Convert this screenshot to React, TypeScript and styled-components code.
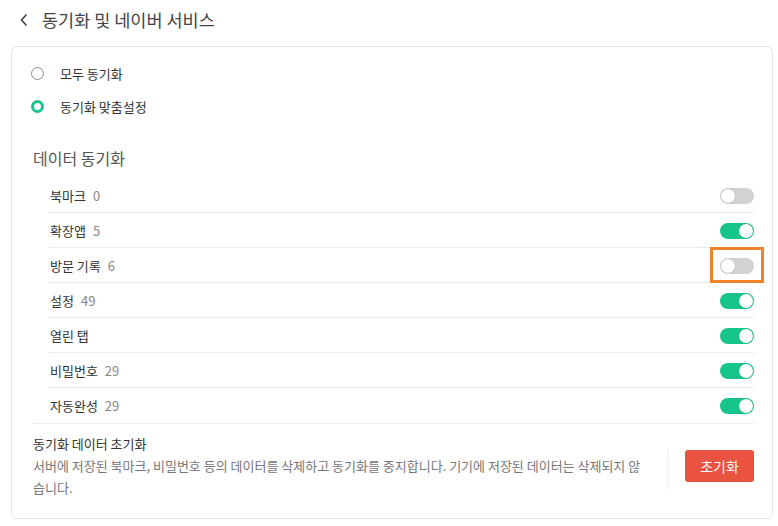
import React, { useState } from 'react';
import styled, { createGlobalStyle } from 'styled-components';

const GlobalStyle = createGlobalStyle`
  html, body {
    margin: 0;
    padding: 0;
    background: #fff;
  }
  body {
    font-family: "Noto Sans CJK KR", "Noto Sans", sans-serif;
    color: #333;
  }
`;

const Page = styled.div`
  width: 778px;
  height: 526px;
  box-sizing: border-box;
  overflow: hidden;
`;

const Header = styled.div`
  height: 40px;
  display: flex;
  align-items: center;
  gap: 10px;
  padding-left: 16px;
`;

const BackButton = styled.button`
  border: 0;
  background: none;
  padding: 0;
  width: 16px;
  height: 16px;
  display: flex;
  align-items: center;
  justify-content: center;
  cursor: pointer;
`;

const Title = styled.h1`
  margin: 0;
  font-size: 17.5px;
  font-weight: 400;
  color: #444;
  line-height: 24px;
`;

const Card = styled.div`
  margin: 6px 5px 0 11px;
  border: 1px solid #e3e3e3;
  border-radius: 6px;
  padding: 10px 0 18px 0;
  box-sizing: border-box;
  height: 473px;
`;

const RadioGroup = styled.div`
  display: flex;
  flex-direction: column;
  padding-left: 19px;
`;

const RadioRow = styled.label`
  height: 33px;
  display: flex;
  align-items: center;
  gap: 16px;
  font-size: 13px;
  color: #333;
  cursor: pointer;
`;

const RadioDot = styled.span<{ $checked: boolean }>`
  width: 13px;
  height: 13px;
  box-sizing: border-box;
  border-radius: 50%;
  border: ${({ $checked }) => ($checked ? '3.5px solid #18c48e' : '1px solid #8a8a8a')};
  background: #fff;
`;

const SectionTitle = styled.h2`
  margin: 23px 0 8px 21px;
  font-size: 16px;
  font-weight: 400;
  color: #555;
  line-height: 24px;
`;

const List = styled.div`
  margin: 0 18px 0 21px;
  border-bottom: 1px solid #ececec;
`;

const Row = styled.div<{ $last?: boolean }>`
  height: 35px;
  box-sizing: border-box;
  margin-left: 16px;
  display: flex;
  align-items: center;
  border-bottom: ${({ $last }) => ($last ? '0' : '1px solid #ececec')};
  position: relative;
`;

const Label = styled.span`
  font-size: 13px;
  color: #333;
  flex: 1;
  padding-left: 1px;
`;

const Count = styled.span`
  color: #888;
  margin-left: 7px;
`;

const Track = styled.button<{ $on: boolean }>`
  width: 34px;
  height: 16px;
  border: 0;
  padding: 0;
  border-radius: 8px;
  background: ${({ $on }) => ($on ? '#16c48c' : '#d2d2d2')};
  position: relative;
  cursor: pointer;
  margin-top: 1px;
`;

const Knob = styled.span<{ $on: boolean }>`
  position: absolute;
  top: 1px;
  left: ${({ $on }) => ($on ? '19px' : '1px')};
  width: 14px;
  height: 14px;
  border-radius: 50%;
  background: #fff;
  box-shadow: 0 0 1px rgba(0, 0, 0, 0.35);
`;

const Highlight = styled.span`
  position: absolute;
  right: -10px;
  top: -1px;
  width: 54px;
  height: 36px;
  box-sizing: border-box;
  border: 3px solid #f0832a;
  pointer-events: none;
`;

const ResetSection = styled.div`
  display: flex;
  align-items: flex-start;
  padding: 9px 18px 0 21px;
`;

const ResetText = styled.div`
  flex: 1;
  padding-right: 21px;
`;

const ResetTitle = styled.div`
  font-size: 13px;
  color: #333;
  line-height: 22px;
`;

const ResetDesc = styled.p`
  margin: 0;
  font-size: 13px;
  color: #777;
  line-height: 22px;
`;

const ResetAction = styled.div`
  border-left: 1px solid #f0f0f0;
  margin-top: 16px;
  height: 42px;
  padding-left: 16px;
  display: flex;
  align-items: flex-start;
`;

const ResetButton = styled.button`
  margin-top: 1px;
  width: 69px;
  height: 32px;
  border: 0;
  border-radius: 3px;
  background: #e9533f;
  color: #fff;
  font-family: "Noto Sans CJK KR", "Noto Sans", sans-serif;
  font-size: 14px;
  cursor: pointer;
`;

type Item = { name: string; count?: number; on: boolean; marked?: boolean };

const initialItems: Item[] = [
  { name: '북마크', count: 0, on: false },
  { name: '확장앱', count: 5, on: true },
  { name: '방문 기록', count: 6, on: false, marked: true },
  { name: '설정', count: 49, on: true },
  { name: '열린 탭', on: true },
  { name: '비밀번호', count: 29, on: true },
  { name: '자동완성', count: 29, on: true },
];

const App: React.FC = () => {
  const [mode, setMode] = useState<'all' | 'custom'>('custom');
  const [items, setItems] = useState(initialItems);

  const toggle = (i: number) => {
    setItems(prev => prev.map((it, idx) => (idx === i ? { ...it, on: !it.on } : it)));
  };

  return (
    <Page>
      <GlobalStyle />
      <Header>
        <BackButton aria-label="뒤로">
          <svg width="10" height="14" viewBox="0 0 10 14">
            <path d="M7.5 1.5 L2.5 7 L7.5 12.5" fill="none" stroke="#444" strokeWidth="1.6" />
          </svg>
        </BackButton>
        <Title>동기화 및 네이버 서비스</Title>
      </Header>
      <Card>
        <RadioGroup>
          <RadioRow onClick={() => setMode('all')}>
            <RadioDot $checked={mode === 'all'} />
            모두 동기화
          </RadioRow>
          <RadioRow onClick={() => setMode('custom')}>
            <RadioDot $checked={mode === 'custom'} />
            동기화 맞춤설정
          </RadioRow>
        </RadioGroup>

        <SectionTitle>데이터 동기화</SectionTitle>
        <List>
          {items.map((it, i) => (
            <Row key={it.name} $last={i === items.length - 1}>
              <Label>
                {it.name}
                {it.count !== undefined && <Count>{it.count}</Count>}
              </Label>
              <Track $on={it.on} onClick={() => toggle(i)}>
                <Knob $on={it.on} />
              </Track>
              {it.marked && <Highlight />}
            </Row>
          ))}
        </List>

        <ResetSection>
          <ResetText>
            <ResetTitle>동기화 데이터 초기화</ResetTitle>
            <ResetDesc>
              서버에 저장된 북마크, 비밀번호 등의 데이터를 삭제하고 동기화를 중지합니다. 기기에 저장된 데이터는 삭제되지 않습니다.
            </ResetDesc>
          </ResetText>
          <ResetAction>
            <ResetButton>초기화</ResetButton>
          </ResetAction>
        </ResetSection>
      </Card>
    </Page>
  );
};

export default App;
